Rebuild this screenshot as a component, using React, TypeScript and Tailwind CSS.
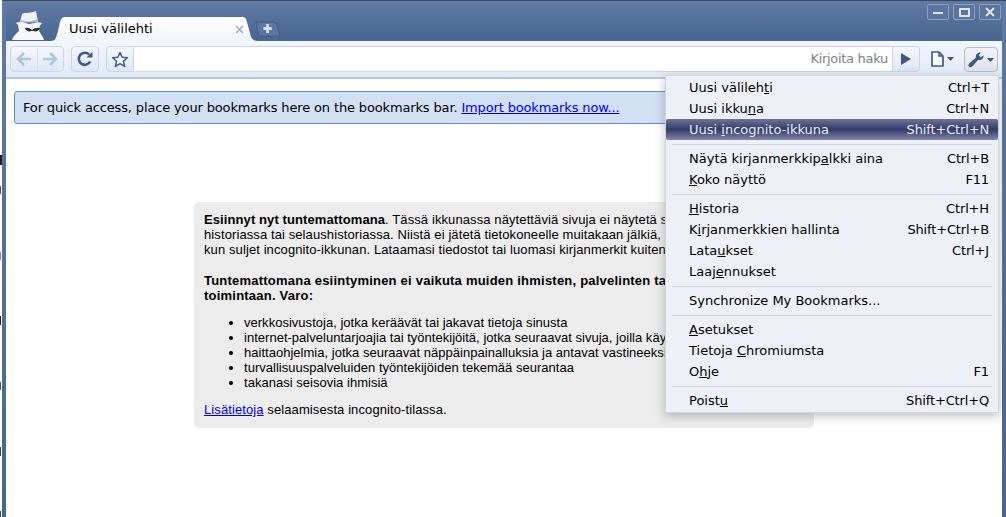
import React from "react";

type MenuRow = { label: React.ReactNode; key?: string; active?: boolean } | "sep";

const rows: MenuRow[] = [
  { label: <>Uusi välileh<u>t</u>i</>, key: "Ctrl+T" },
  { label: <>Uusi ikku<u>n</u>a</>, key: "Ctrl+N" },
  { label: <>Uusi <u>i</u>ncognito-ikkuna</>, key: "Shift+Ctrl+N", active: true },
  "sep",
  { label: <>Näytä kirjanmerkkip<u>a</u>lkki aina</>, key: "Ctrl+B" },
  { label: <><u>K</u>oko näyttö</>, key: "F11" },
  "sep",
  { label: <><u>H</u>istoria</>, key: "Ctrl+H" },
  { label: <>K<u>i</u>rjanmerkkien hallinta</>, key: "Shift+Ctrl+B" },
  { label: <>Lata<u>u</u>kset</>, key: "Ctrl+J" },
  { label: <>Laaj<u>e</u>nnukset</> },
  "sep",
  { label: <>Synchronize My Bookmarks...</> },
  "sep",
  { label: <><u>A</u>setukset</> },
  { label: <>Tietoja <u>C</u>hromiumsta</> },
  { label: <>O<u>h</u>je</>, key: "F1" },
  "sep",
  { label: <>Poist<u>u</u></>, key: "Shift+Ctrl+Q" },
];

function Incognito() {
  return (
    <svg width="34" height="32" viewBox="0 0 34 32" className="ml-[5px] shrink-0">
      <path d="M1 31 C2 27 5 25 8 22 L7 16 L29 16 L28 22 C30 25 32 28 33 31 Z" fill="#f6f7fa" />
      <path d="M9 13 L11 5 C14 3 17 5 25 2 L27 13 Z" fill="#eef0f5" />
      <path d="M10 11 C15 13 21 13 26 10 L27 13 L9 14 Z" fill="#aeb8c9" />
      <path d="M5 14 C10 12 11 13 18 15 C24 14 26 12 31 14 C30 17 24 18 18 18 C12 18 7 17 5 14 Z" fill="#f4f5f8" />
      <path d="M14 19 C17 18.5 19 19.5 21 21 C23 19.5 26 18.5 29 19 C28 22 25 23 22.5 22 L20 22 C18 23 15 22 14 19 Z" fill="#2a2d36" />
    </svg>
  );
}

function Tab() {
  return (
    <div className="relative ml-[6px] h-[24px] w-[207px] shrink-0">
      <svg width="207" height="24" viewBox="0 0 207 24" className="absolute inset-0">
        <defs>
          <linearGradient id="tabfill" x1="0" x2="0" y1="0" y2="1">
            <stop offset="0" stopColor="#ffffff" />
            <stop offset="1" stopColor="#f0f4fb" />
          </linearGradient>
        </defs>
        <path d="M0 24 C5 24 5 20 7 14 L9 5 C10 1 12 0 15 0 L191 0 C194 0 195 1 196 5 L199 16 C200 21 202 24 207 24 Z" fill="url(#tabfill)" />
      </svg>
      <span className="absolute left-[18px] top-[4px] text-[13px] leading-[16px] text-black">Uusi välilehti</span>
      <svg width="9" height="9" viewBox="0 0 9 9" className="absolute left-[184px] top-[8px]">
        <path d="M1 1 L8 8 M8 1 L1 8" stroke="#a9adb3" strokeWidth="1.6" />
      </svg>
    </div>
  );
}

function NewTab() {
  return (
    <svg width="26" height="16" viewBox="0 0 28 16" preserveAspectRatio="none" className="mb-[4px] ml-[-3px] shrink-0">
      <path d="M1 1 L20 1 C22 1 23 2 24 5 L27 15 L6 15 C4 15 4 14 3 11 Z" fill="#5d789f" stroke="#3f5a82" />
      <path d="M12 3 L15 3 L15 6 L18 6 L18 9 L15 9 L15 12 L12 12 L12 9 L9 9 L9 6 L12 6 Z" fill="#d3deee" />
    </svg>
  );
}

function WinButton({ children }: { children: React.ReactNode }) {
  return (
    <div className="flex h-[16px] w-[22px] items-center justify-center rounded-[2px] border border-[#8ba1c1] bg-[#5a769e]">
      {children}
    </div>
  );
}

export default function App() {
  return (
    <div className="relative flex h-[517px] w-[1006px] overflow-hidden bg-white font-['DejaVu_Sans',sans-serif]">
      {/* bits of the window behind */}
      <div className="absolute left-0 top-[155px] h-[10px] w-[2px] bg-[#222]" />
      <div className="absolute left-0 top-[186px] h-[8px] w-[1px] bg-[#555]" />
      <div className="absolute left-0 top-[252px] h-[8px] w-[1px] bg-[#888]" />
      <div className="absolute left-0 top-[316px] h-[9px] w-[1px] bg-[#222]" />
      <div className="absolute left-0 top-[382px] h-[8px] w-[1px] bg-[#555]" />
      <div className="absolute left-0 top-[447px] h-[9px] w-[1px] bg-[#444]" />
      <div className="absolute left-0 top-[511px] h-[6px] w-[1px] bg-[#444]" />

      <div className="ml-[2px] flex min-w-0 flex-1 flex-col border-t border-[#3d4551] bg-gradient-to-b from-[#5f7ba4] to-[#486590] px-[4px] pb-0">
        <div className="flex h-[40px] shrink-0 items-end bg-gradient-to-b from-[#5f7ba4] to-[#496690]">
          <Incognito />
          <Tab />
          <NewTab />
          <div className="mb-auto ml-auto mr-[1px] mt-[3px] flex gap-[4px]">
            <WinButton>
              <div className="h-[2px] w-[10px] translate-y-[1px] bg-[#dfe6f1]" />
            </WinButton>
            <WinButton>
              <div className="h-[9px] w-[11px] rounded-[1px] border-2 border-[#dfe6f1]" />
            </WinButton>
            <WinButton>
              <svg width="10" height="10" viewBox="0 0 10 10">
                <path d="M1 1 L9 9 M9 1 L1 9" stroke="#e6ebf4" strokeWidth="1.8" />
              </svg>
            </WinButton>
          </div>
        </div>

        <div className="flex h-[38px] shrink-0 items-start border-b-2 border-[#b3c5e0] bg-gradient-to-b from-[#f3f6fc] to-[#e3eaf6] pl-[4px] pr-[4px] pt-[5px]">
          <div className="flex h-[26px] w-[54px] items-center rounded-[4px] border border-[#c9d6ea] bg-gradient-to-b from-[#f4f7fc] to-[#dfe7f5]">
            <div className="flex h-full flex-1 items-center justify-center border-r border-[#d5dfef]">
              <svg width="16" height="14" viewBox="0 0 16 14">
                <path d="M8 1 L2 7 L8 13 M2.5 7 L15 7" fill="none" stroke="#b2c3de" strokeWidth="2.6" />
              </svg>
            </div>
            <div className="flex h-full flex-1 items-center justify-center">
              <svg width="16" height="14" viewBox="0 0 16 14">
                <path d="M8 1 L14 7 L8 13 M13.5 7 L1 7" fill="none" stroke="#b2c3de" strokeWidth="2.6" />
              </svg>
            </div>
          </div>
          <div className="ml-[7px] flex h-[26px] w-[28px] items-center justify-center rounded-[4px] border border-[#c9d6ea] bg-gradient-to-b from-[#f4f7fc] to-[#dfe7f5]">
            <svg width="16" height="16" viewBox="0 0 16 16">
              <path d="M13.2 10.5 A6 6 0 1 1 12.2 3.7" fill="none" stroke="#3a5a8c" strokeWidth="2.6" />
              <path d="M9.5 6.5 L15.5 6.5 L15.5 0.8 Z" fill="#3a5a8c" />
            </svg>
          </div>
          <div className="ml-[7px] flex h-[26px] w-[28px] items-center justify-center rounded-l-[4px] border border-[#c9d6ea] bg-gradient-to-b from-[#f4f7fc] to-[#dfe7f5]">
            <svg width="18" height="17" viewBox="0 0 18 17">
              <path d="M9 1.5 L11.1 6.3 L16.4 6.8 L12.4 10.3 L13.6 15.4 L9 12.7 L4.4 15.4 L5.6 10.3 L1.6 6.8 L6.9 6.3 Z" fill="#f4f7fc" stroke="#3a5a8c" strokeWidth="1.5" strokeLinejoin="round" />
            </svg>
          </div>
          <div className="flex h-[26px] w-[758px] items-center justify-end border-y border-[#c9d6ea] bg-white pr-[4px]">
            <span className="text-[13px] leading-[16px] tracking-[-0.3px] text-[#7d8085]">Kirjoita haku</span>
          </div>
          <div className="flex h-[26px] w-[28px] items-center justify-center rounded-r-[4px] border border-[#c9d6ea] bg-gradient-to-b from-[#f4f7fc] to-[#dfe7f5]">
            <svg width="10" height="12" viewBox="0 0 10 12">
              <path d="M0 0 L10 6 L0 12 Z" fill="#3a5a8c" />
            </svg>
          </div>
          <div className="ml-[9px] flex h-[26px] w-[27px] items-center justify-center gap-[3px]">
            <svg width="13" height="16" viewBox="0 0 13 16">
              <path d="M1 1 L8 1 L12 5 L12 15 L1 15 Z" fill="#f6f8fc" stroke="#3a5a8c" strokeWidth="1.7" />
              <path d="M8 1 L8 5 L12 5" fill="none" stroke="#3a5a8c" strokeWidth="1.5" />
            </svg>
            <svg width="7" height="4" viewBox="0 0 7 4">
              <path d="M0 0 L7 0 L3.5 4 Z" fill="#3a5a8c" />
            </svg>
          </div>
          <div className="ml-[8px] mt-[1px] flex h-[25px] w-[34px] items-center justify-center gap-[3px] rounded-[4px] border border-[#b9bfc9] bg-gradient-to-b from-[#f2f3f6] to-[#dfe3ea]">
            <svg width="16" height="16" viewBox="0 0 16 16">
              <path d="M15.6 3.4 C15.8 6.6 12.8 8.6 10.2 7.8 L5 13.8 C3.8 15.4 1.6 15.6 0.8 14.4 C0 13.2 0.6 11.8 2 10.8 L8 5.6 C7.4 2.8 9.6 0.4 12.8 0.6 L10.8 3.2 L12.6 5.2 Z" fill="#3a5a8c" />
            </svg>
            <svg width="7" height="4" viewBox="0 0 7 4">
              <path d="M0 0 L7 0 L3.5 4 Z" fill="#3a5a8c" />
            </svg>
          </div>
        </div>

        <div className="min-h-0 flex-1 overflow-hidden bg-white px-[8px] pt-[12px]">
          <div className="flex h-[33px] items-center whitespace-nowrap rounded-[3px] border border-[#5b8fd6] bg-[#d2e0f4] pl-[8px] text-[13px] leading-[16px] tracking-[-0.145px] text-black">
            For quick access, place your bookmarks here on the bookmarks bar.&nbsp;
            <a className="text-[#0000ee] underline">Import bookmarks now...</a>
          </div>

          <div className="mx-auto mt-[78px] w-[620px] whitespace-nowrap rounded-[5px] bg-[#ececec] p-[10px] pb-[11px] font-['Liberation_Sans',sans-serif] text-[13px] leading-[15px] tracking-[0.1px] text-black">
            <p>
              <b>Esiinnyt nyt tuntemattomana</b>. Tässä ikkunassa näytettäviä sivuja ei näytetä s
              <br />
              historiassa tai selaushistoriassa. Niistä ei jätetä tietokoneelle muitakaan jälkiä,
              <br />
              kun suljet incognito-ikkunan. Lataamasi tiedostot tai luomasi kirjanmerkit kuiten
            </p>
            <p className="mt-[16px] font-bold tracking-[0.22px]">
              Tuntemattomana esiintyminen ei vaikuta muiden ihmisten, palvelinten ta
              <br />
              toimintaan. Varo:
            </p>
            <ul className="mt-[12px] list-disc pl-[40px] tracking-[0.02px]">
              <li>verkkosivustoja, jotka keräävät tai jakavat tietoja sinusta</li>
              <li>internet-palveluntarjoajia tai työntekijöitä, jotka seuraavat sivuja, joilla käy</li>
              <li>haittaohjelmia, jotka seuraavat näppäinpainalluksia ja antavat vastineeksi</li>
              <li>turvallisuuspalveluiden työntekijöiden tekemää seurantaa</li>
              <li>takanasi seisovia ihmisiä</li>
            </ul>
            <p className="mt-[12px]">
              <a className="text-[#0000ee] underline">Lisätietoja</a> selaamisesta incognito-tilassa.
            </p>
          </div>
        </div>
      </div>

      {/* wrench menu */}
      <div className="absolute left-[665px] top-[75px] w-[334px] border border-[#d0d6de] bg-[#edf1f7] py-[1px] text-[13px] leading-[16px] text-black shadow-[0_3px_10px_rgba(60,70,85,0.35)]">
        {rows.map((row, i) =>
          row === "sep" ? (
            <div key={i} className="flex h-[8px] items-center px-[6px]">
              <div className="h-[1px] w-full bg-[#cfd5dd]" />
            </div>
          ) : (
            <div
              key={i}
              className={
                row.active
                  ? "flex h-[21px] items-center justify-between rounded-[2px] bg-gradient-to-b from-[#6e7499] via-[#343a68] to-[#8388a8] pl-[23px] pr-[9px] text-[#e8ebf4]"
                  : "flex h-[21px] items-center justify-between pl-[23px] pr-[9px]"
              }
            >
              <span>{row.label}</span>
              {row.key && <span className="tracking-[-0.15px]">{row.key}</span>}
            </div>
          )
        )}
      </div>
    </div>
  );
}
